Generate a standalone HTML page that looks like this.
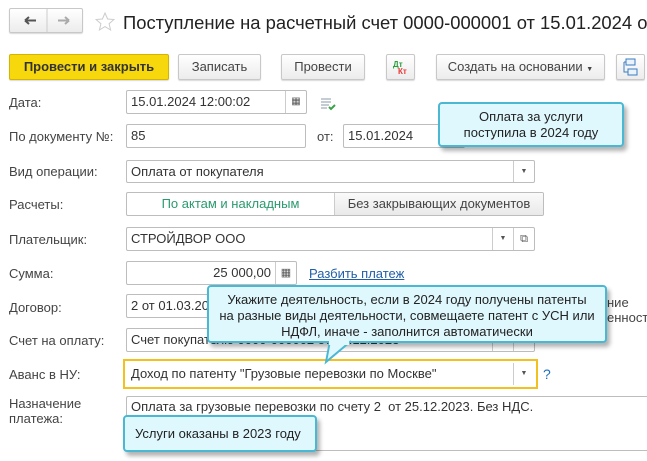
<!DOCTYPE html>
<html><head><meta charset="utf-8"><style>
*{box-sizing:border-box}
body{margin:0;width:647px;height:461px;background:#fff;font-family:"Liberation Sans",Arial,sans-serif;font-size:13px;color:#333;position:relative;overflow:hidden}
.a{position:absolute}
.btn{position:absolute;border:1px solid #c8c8c8;border-radius:2px;background:linear-gradient(#fff,#ececec);box-shadow:0 1px 1px rgba(0,0,0,.15);text-align:center;line-height:24px;color:#444;font-size:13px}
.in{position:absolute;border:1px solid #bdbdbd;border-radius:2px;background:#fff;padding-left:4px;line-height:22px;white-space:nowrap;overflow:hidden;color:#333}
.dd{position:absolute;top:0;bottom:0;border-left:1px solid #ccc;width:21px;text-align:center;font-size:7px;color:#555;line-height:22px}
.lbl{position:absolute;left:9px;color:#444}
.tip{position:absolute;background:#dff8fd;border:2px solid #4bb8d3;border-radius:4px;box-shadow:3px 4px 4px rgba(0,0,0,.3);text-align:center;color:#222;font-size:13px;line-height:16px}
</style></head><body>
<div class="btn" style="left:9px;top:8px;width:74px;height:25px">
<svg class="a" style="left:0;top:0" width="72" height="23"><path d="M15 11.5h11M15 11.5l4-3.5M15 11.5l4 3.5" stroke="#555" stroke-width="2" fill="none"/><path d="M37 0v23" stroke="#ccc"/><path d="M48 11.5h11M59 11.5l-4-3.5M59 11.5l-4 3.5" stroke="#aaa" stroke-width="2" fill="none"/></svg></div>
<svg class="a" style="left:95px;top:12px" width="20" height="20"><path d="M10 1l2.6 6 6.4.5-4.9 4.2 1.5 6.3L10 14.6 4.4 18l1.5-6.3L1 7.5 7.4 7z" fill="none" stroke="#ccc"/></svg>
<div class="a" style="left:123px;top:12px;width:524px;overflow:hidden;font-size:18.4px;color:#222;white-space:nowrap">Поступление на расчетный счет 0000-000001 от 15.01.2024 от</div>

<div class="btn" style="left:9px;top:54px;width:160px;height:26px;background:#f6d80c;border-color:#d5b400;color:#333;font-weight:bold">Провести и закрыть</div>
<div class="btn" style="left:178px;top:54px;width:83px;height:26px">Записать</div>
<div class="btn" style="left:281px;top:54px;width:84px;height:26px">Провести</div>
<div class="btn" style="left:386px;top:54px;width:29px;height:26px;font-size:8px;line-height:8px;font-weight:bold"><span class="a" style="left:6px;top:6px;color:#2a9d3a">Дт</span><span class="a" style="left:11px;top:13px;color:#e33">Кт</span></div>
<div class="btn" style="left:436px;top:54px;width:169px;height:26px">Создать на основании <span style="font-size:7px">▼</span></div>
<div class="btn" style="left:616px;top:54px;width:29px;height:26px"><svg width="16" height="18" viewBox="0 0 16 18" style="margin-top:3px"><rect x="3" y="1" width="9" height="6" fill="#eaf2fb" stroke="#3a7cc0"/><rect x="5" y="11" width="9" height="6" fill="#eaf2fb" stroke="#3a7cc0"/><path d="M1 4h2M1 4v10h4" fill="none" stroke="#3a7cc0"/></svg></div>

<div class="lbl" style="top:95px">Дата:</div>
<div class="in" style="left:126px;top:90px;width:181px;height:24px">15.01.2024 12:00:02<div class="dd" style="right:0;font-size:10px">▦</div></div>
<svg class="a" style="left:320px;top:97px" width="16" height="14"><path d="M1 2h10M1 5h10M1 8h8M1 11h6" stroke="#8a9aa8"/><path d="M9 10l2 2 4-4" stroke="#3aa34a" stroke-width="2" fill="none"/></svg>

<div class="lbl" style="top:129px">По документу №:</div>
<div class="in" style="left:126px;top:124px;width:180px;height:24px">85</div>
<div class="a" style="left:317px;top:129px;color:#444">от:</div>
<div class="in" style="left:343px;top:124px;width:122px;height:24px">15.01.2024</div>

<div class="lbl" style="top:164px">Вид операции:</div>
<div class="in" style="left:126px;top:160px;width:409px;height:23px">Оплата от покупателя<div class="dd" style="right:0">▼</div></div>

<div class="lbl" style="top:197px">Расчеты:</div>
<div class="in" style="left:126px;top:192px;width:418px;height:24px;padding:0">
<div class="a" style="left:0;width:207px;text-align:center;color:#2a9a6e">По актам и накладным</div>
<div class="a" style="left:207px;right:0;top:0;bottom:0;border-left:1px solid #ccc;background:linear-gradient(#fafafa,#e9e9e9);text-align:center;color:#444">Без закрывающих документов</div></div>

<div class="lbl" style="top:232px">Плательщик:</div>
<div class="in" style="left:126px;top:227px;width:409px;height:24px">СТРОЙДВОР ООО<div class="dd" style="right:21px">▼</div><div class="dd" style="right:0;font-size:11px">⧉</div></div>

<div class="lbl" style="top:266px">Сумма:</div>
<div class="in" style="left:126px;top:261px;width:171px;height:24px;text-align:right;padding-right:25px">25 000,00<div class="dd" style="right:0;font-size:11px">▦</div></div>
<div class="a" style="left:309px;top:266px;color:#1f5fa8;text-decoration:underline">Разбить платеж</div>

<div class="lbl" style="top:300px">Договор:</div>
<div class="in" style="left:126px;top:294px;width:200px;height:24px">2 от 01.03.2023</div>
<div class="a" style="left:607px;top:295px;color:#444">ние</div>
<div class="a" style="left:607px;top:310px;color:#444;width:40px;overflow:hidden">енност</div>

<div class="lbl" style="top:333px">Счет на оплату:</div>
<div class="in" style="left:126px;top:328px;width:409px;height:24px">Счет покупателю 0000-000002 от 25.12.2023<div class="dd" style="right:21px">▼</div><div class="dd" style="right:0"></div></div>

<div class="lbl" style="top:367px">Аванс в НУ:</div>
<div class="a" style="left:123px;top:359px;width:415px;height:30px;border:2px solid #f2c01f"></div>
<div class="in" style="left:126px;top:362px;width:409px;height:24px;border-color:#fff">Доход по патенту "Грузовые перевозки по Москве"<div class="dd" style="right:0">▼</div></div>
<div class="a" style="left:543px;top:366px;color:#1f6fc0;font-size:14px">?</div>

<div class="lbl" style="top:396px;line-height:15px">Назначение<br>платежа:</div>
<div class="in" style="left:126px;top:396px;width:521px;height:55px;line-height:20px;border-right:none;border-radius:2px 0 0 2px">Оплата за грузовые перевозки по счету 2&nbsp; от 25.12.2023. Без НДС.</div>

<div class="tip" style="left:438px;top:102px;width:186px;height:45px;padding-top:5px">Оплата за услуги<br>поступила в 2024 году</div>
<div class="tip" style="left:207px;top:285px;width:400px;height:58px;padding-top:5px">Укажите деятельность, если в 2024 году получены патенты<br>на разные виды деятельности, совмещаете патент с УСН или<br>НДФЛ, иначе - заполнится автоматически</div>
<svg class="a" style="left:320px;top:339px" width="40" height="26"><path d="M10 2L6 23L31 2" fill="#dff8fd" stroke="#4bb8d3" stroke-width="2"/><path d="M9 4L29 4" stroke="#dff8fd" stroke-width="4"/></svg>
<div class="tip" style="left:123px;top:415px;width:194px;height:37px;line-height:33px;text-align:left;padding-left:10px">Услуги оказаны в 2023 году</div>
</body></html>
